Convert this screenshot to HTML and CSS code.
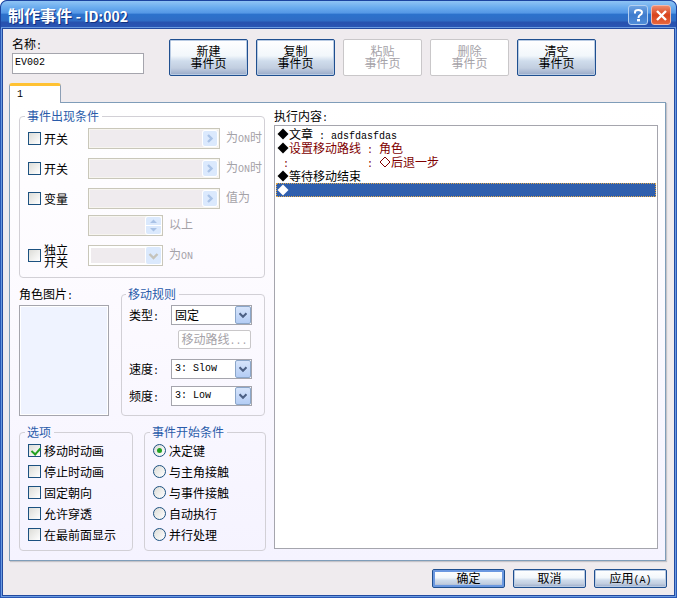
FILE: index.html
```html
<!DOCTYPE html>
<html lang="zh-CN">
<head>
    <meta charset="UTF-8">
    <meta name="viewport" content="width=device-width, initial-scale=1.0">
    <title>制作事件 - ID:002</title>
    <link rel="stylesheet" href="styles.css">
</head>
<body>
    <div class="window">
        <div class="title-bar">
            <h1 class="title">制作事件 <span class="title-id">- ID:002</span></h1>
            <button class="title-button help" aria-label="帮助">
                <svg width="17" height="17" viewBox="0 0 17 17"><path d="M5 6.5V5.2Q5 3 8.3 3Q12 3 12 5.6Q12 7.2 10 8.2Q8.5 9 8.5 11" fill="none" stroke="#fff" stroke-width="2"/><rect x="7" y="12" width="3" height="2.4" fill="#fff"/></svg>
            </button>
            <button class="title-button close" aria-label="关闭">
                <svg width="17" height="17" viewBox="0 0 17 17"><path d="M4 4L13 13M13 4L4 13" stroke="#fff" stroke-width="2.4"/></svg>
            </button>
        </div>

        <div class="content">
            <div class="header">
                <div class="name-field">
                    <label for="name">名称<span class="latin">:</span></label>
                    <input class="text-box" type="text" id="name" value="EV002">
                </div>
                <div class="page-buttons">
                    <button class="button page-button">新建<br>事件页</button>
                    <button class="button page-button">复制<br>事件页</button>
                    <button class="button page-button" disabled>粘贴<br>事件页</button>
                    <button class="button page-button" disabled>删除<br>事件页</button>
                    <button class="button page-button">清空<br>事件页</button>
                </div>
            </div>

            <button class="tab">1</button>
            <div class="panel">
                <div class="settings">
                    <fieldset class="group conditions">
                        <legend>事件出现条件</legend>
                        <div class="row">
                            <label class="check"><input type="checkbox">开关</label>
                            <button class="picker" aria-label="选择开关" disabled>
                                <svg class="arrow" width="14" height="15" viewBox="0 0 14 15"><path d="M5 4L8.5 7.5L5 11" fill="none" stroke="#a9c2e6" stroke-width="2.4"/></svg>
                            </button>
                            <span class="suffix">为<span class="latin">ON</span>时</span>
                        </div>
                        <div class="row">
                            <label class="check"><input type="checkbox">开关</label>
                            <button class="picker" aria-label="选择开关" disabled>
                                <svg class="arrow" width="14" height="15" viewBox="0 0 14 15"><path d="M5 4L8.5 7.5L5 11" fill="none" stroke="#a9c2e6" stroke-width="2.4"/></svg>
                            </button>
                            <span class="suffix">为<span class="latin">ON</span>时</span>
                        </div>
                        <div class="row variable">
                            <label class="check"><input type="checkbox">变量</label>
                            <button class="picker" aria-label="选择变量" disabled>
                                <svg class="arrow" width="14" height="15" viewBox="0 0 14 15"><path d="M5 4L8.5 7.5L5 11" fill="none" stroke="#a9c2e6" stroke-width="2.4"/></svg>
                            </button>
                            <span class="suffix">值为</span>
                        </div>
                        <div class="row amount">
                            <div class="spinner">
                                <input type="text" aria-label="变量值" disabled>
                                <svg class="arrow" width="15" height="17" viewBox="0 0 15 17"><path d="M0 8.5H15" stroke="#fff"/><path d="M4 6L7.5 2.5L11 6ZM4 11L7.5 14.5L11 11Z" fill="#a9c2e6"/></svg>
                            </div>
                            <span class="suffix">以上</span>
                        </div>
                        <div class="row">
                            <label class="check"><input type="checkbox"><span>独立<br>开关</span></label>
                            <div class="select self-switch">
                                <select aria-label="独立开关" disabled><option></option></select>
                                <svg class="arrow" width="15" height="17" viewBox="0 0 15 17"><path d="M3.5 7L7.5 11L11.5 7" fill="none" stroke="#c5c3bb" stroke-width="2.4"/></svg>
                            </div>
                            <span class="suffix">为<span class="latin">ON</span></span>
                        </div>
                    </fieldset>

                    <div class="columns">
                        <div class="graphic">
                            <span>角色图片<span class="latin">:</span></span>
                            <button class="graphic-box" aria-label="角色图片"></button>
                        </div>
                        <fieldset class="group movement">
                            <legend>移动规则</legend>
                            <div class="row">
                                <label class="caption" for="type">类型<span class="latin">:</span></label>
                                <div class="select">
                                    <select id="type" class="cjk"><option>固定</option></select>
                                    <svg class="arrow" width="16" height="18" viewBox="0 0 16 18"><path d="M4 7L8 11L12 7" fill="none" stroke="#4d6185" stroke-width="2.4"/></svg>
                                </div>
                            </div>
                            <button class="button route" disabled>移动路线<span class="latin">...</span></button>
                            <div class="row speed">
                                <label class="caption" for="speed">速度<span class="latin">:</span></label>
                                <div class="select">
                                    <select id="speed"><option>3: Slow</option></select>
                                    <svg class="arrow" width="16" height="18" viewBox="0 0 16 18"><path d="M4 7L8 11L12 7" fill="none" stroke="#4d6185" stroke-width="2.4"/></svg>
                                </div>
                            </div>
                            <div class="row">
                                <label class="caption" for="freq">频度<span class="latin">:</span></label>
                                <div class="select">
                                    <select id="freq"><option>3: Low</option></select>
                                    <svg class="arrow" width="16" height="18" viewBox="0 0 16 18"><path d="M4 7L8 11L12 7" fill="none" stroke="#4d6185" stroke-width="2.4"/></svg>
                                </div>
                            </div>
                        </fieldset>
                    </div>

                    <div class="columns">
                        <fieldset class="group options">
                            <legend>选项</legend>
                            <label class="check"><input type="checkbox" checked>移动时动画</label>
                            <label class="check"><input type="checkbox">停止时动画</label>
                            <label class="check"><input type="checkbox">固定朝向</label>
                            <label class="check"><input type="checkbox">允许穿透</label>
                            <label class="check"><input type="checkbox">在最前面显示</label>
                        </fieldset>
                        <fieldset class="group options trigger">
                            <legend>事件开始条件</legend>
                            <label class="check"><input type="radio" name="trigger" checked>决定键</label>
                            <label class="check"><input type="radio" name="trigger">与主角接触</label>
                            <label class="check"><input type="radio" name="trigger">与事件接触</label>
                            <label class="check"><input type="radio" name="trigger">自动执行</label>
                            <label class="check"><input type="radio" name="trigger">并行处理</label>
                        </fieldset>
                    </div>
                </div>

                <div class="commands">
                    <div>执行内容<span class="latin">:</span></div>
                    <ul class="command-list">
                        <li><svg class="mark" viewBox="0 0 12 12"><path d="M6 0.5L11.5 6L6 11.5L0.5 6Z"/></svg>文章<span class="latin"> : adsfdasfdas</span></li>
                        <li><svg class="mark" viewBox="0 0 12 12"><path d="M6 0.5L11.5 6L6 11.5L0.5 6Z"/></svg><span class="move">设置移动路线<span class="latin"> : </span>角色</span></li>
                        <li class="move"><span class="latin"> :             : </span><svg class="mark hollow" viewBox="0 0 12 12"><path d="M6 1L11 6L6 11L1 6Z"/></svg>后退一步</li>
                        <li><svg class="mark" viewBox="0 0 12 12"><path d="M6 0.5L11.5 6L6 11.5L0.5 6Z"/></svg>等待移动结束</li>
                        <li class="selected"><svg class="mark" viewBox="0 0 12 12"><path d="M6 0.5L11.5 6L6 11.5L0.5 6Z"/></svg></li>
                    </ul>
                </div>
            </div>

            <div class="footer">
                <button class="button default">确定</button>
                <button class="button">取消</button>
                <button class="button">应用<span class="latin">(A)</span></button>
            </div>
        </div>
    </div>
</body>
</html>
```
FILE: styles.css
```css
* {
    box-sizing: border-box;
}

body {
    margin: 0;
    background-color: #fff;
    color: #000;
    font: 12px/14px "Noto Sans CJK SC", sans-serif;
}

button, input, select {
    margin: 0;
    padding: 0;
    font: inherit;
    color: inherit;
}

.latin {
    font-family: "Liberation Mono", monospace;
    font-size: 10px;
    line-height: 0;
    white-space: pre;
}

/* window frame */
.window {
    min-height: 100vh;
    display: flex;
    flex-direction: column;
    border-radius: 7px 7px 0 0;
    background-color: #2a57b5;
    overflow: hidden;
}

.title-bar {
    height: 29px;
    flex: none;
    display: flex;
    align-items: center;
    gap: 3px;
    padding: 1px 5px 0 7px;
    border: 1px solid #1c44a0;
    border-bottom-color: #234a9f;
    border-radius: 7px 7px 0 0;
    background: linear-gradient(#8fc4f4 0, #69abee 25%, #5598e6 44%, #2c72cc 50%, #2f6dc6 72%, #2751ae 80%, #2a56b6 100%);
}

.title {
    flex: 1;
    margin: 0;
    color: #fff;
    font-size: 16px;
    line-height: 20px;
    font-weight: bold;
    text-shadow: 1px 1px 0 #10307f;
}

.title-id {
    font-size: 14px;
}

.title-button {
    width: 20px;
    height: 20px;
    display: flex;
    align-items: center;
    justify-content: center;
    border: 1px solid #b4d0f0;
    border-radius: 3px;
    background: linear-gradient(#6fa4e2, #3f7bcd 50%, #4f8cd8);
}

.title-button.close {
    border-color: #f0b8ac;
    background: linear-gradient(#ee8a6c, #d8431c 50%, #e8663c);
}

.content {
    flex: 1;
    display: flex;
    flex-direction: column;
    margin: 0 3px 3px;
    padding: 8px 7px 7px 6px;
    background-color: #efebee;
    box-shadow: 0 0 0 1px #234a9f, 0 0 0 2px #6a9be0;
}

/* name and page buttons */
.header {
    display: flex;
    gap: 25px;
    padding: 0 3px 7px;
}

.name-field {
    width: 132px;
    display: flex;
    flex-direction: column;
    gap: 2px;
}

.text-box {
    height: 21px;
    padding: 0 2px 2px;
    border: 1px solid #a5a5ad;
    background-color: #fff;
    font-family: "Liberation Mono", monospace;
    font-size: 10px;
}

.page-buttons {
    display: flex;
    gap: 8px;
    padding-top: 2px;
}

.button {
    width: 73px;
    height: 19px;
    padding-bottom: 1px;
    border: 1px solid #1f4f8f;
    border-radius: 2px;
    background: linear-gradient(#fff, #f2f7fb 45%, #cfdcec 60%, #c2cee0 80%, #98a9c8);
    box-shadow: inset 0 0 0 1px #b9cbe3;
    line-height: 14px;
    white-space: nowrap;
}

.page-button {
    width: 79px;
    height: 37px;
    line-height: 12px;
}

.button.default {
    box-shadow: inset 0 0 0 2px #6b98e0;
}

.button:disabled {
    border-color: #c9c7c9;
    background: #fff;
    box-shadow: none;
    color: #a5a2a8;
}

/* event page */
.tab {
    width: 52px;
    height: 20px;
    flex: none;
    align-self: flex-start;
    position: relative;
    padding: 0 0 0 7px;
    border: 1px solid #8d9fb5;
    border-top: 3px solid #ffc233;
    border-bottom: none;
    border-radius: 3px 3px 0 0;
    background-color: #fff;
    font-family: "Liberation Mono", monospace;
    font-size: 10px;
    text-align: left;
}

.panel {
    flex: 1;
    display: flex;
    gap: 8px;
    margin: -1px 1px 0 0;
    padding: 6px 7px 9px 9px;
    border: 1px solid #7f9db9;
    background: linear-gradient(#fff, #fdfbff 35%, #f5f3ff);
    box-shadow: 1px 1px 1px #c5c3c8;
}

.settings {
    width: 247px;
    flex: none;
    display: flex;
    flex-direction: column;
    gap: 9px;
}

.group {
    min-width: 0;
    margin: 0;
    padding: 0 8px;
    border: 1px solid #d2d0d6;
    border-radius: 4px;
}

.group legend {
    margin-left: -3px;
    padding: 0 3px 0 2px;
    color: #2a5caa;
}

.row {
    display: flex;
    align-items: center;
}

.conditions {
    width: 246px;
    padding: 5px 0 11px 8px;
}

.conditions .row {
    height: 21px;
    margin-bottom: 9px;
}

.conditions .row.variable {
    margin-bottom: 6px;
}

.conditions .row:last-child {
    margin-bottom: 0;
}

.conditions .check {
    width: 60px;
    line-height: 12px;
}

.amount {
    padding-left: 60px;
}

.check {
    display: flex;
    align-items: center;
    gap: 3px;
    white-space: nowrap;
}

.check input {
    appearance: none;
    width: 13px;
    height: 13px;
    flex: none;
    position: relative;
    border: 1px solid #1c5180;
    background: linear-gradient(135deg, #dcdcd7, #fff);
}

.check input[type="radio"] {
    border-radius: 50%;
}

.check input[type="checkbox"]:checked::after {
    content: "";
    position: absolute;
    left: 4px;
    top: 1px;
    width: 4px;
    height: 7px;
    border: solid #21a121;
    border-width: 0 2px 2px 0;
    transform: rotate(42deg);
}

.check input[type="radio"]:checked::after {
    content: "";
    position: absolute;
    left: 3px;
    top: 3px;
    width: 5px;
    height: 5px;
    border-radius: 50%;
    background-color: #21a121;
}

.picker, .spinner {
    width: 132px;
    height: 21px;
    flex: none;
    position: relative;
    border: 1px solid #c9c7ba;
    box-shadow: inset 0 0 0 1px #f7f5f0;
    background-color: #efebee;
}

.spinner {
    width: 75px;
}

.spinner input {
    width: 55px;
    height: 17px;
    border: none;
    background: none;
}

.arrow {
    position: absolute;
    top: 1px;
    right: 1px;
    border-radius: 2px;
    background: linear-gradient(#d6e4fb, #b4cdf5);
    pointer-events: none;
}

.picker .arrow {
    top: 2px;
    right: 2px;
    background: #dbe9fd;
    box-shadow: 0 0 0 1px #fff;
}

.suffix {
    padding: 0 0 3px 6px;
    color: #a5a2a8;
    white-space: nowrap;
}

.select {
    width: 81px;
    height: 20px;
    flex: none;
    position: relative;
}

.select select {
    appearance: none;
    width: 100%;
    height: 100%;
    padding: 0 18px 0 3px;
    border: 1px solid #a5a5ad;
    border-radius: 0;
    background-color: #fff;
    font-family: "Liberation Mono", monospace;
    font-size: 10px;
}

.select .cjk {
    font-family: "Noto Sans CJK SC", sans-serif;
    font-size: 12px;
}

.select .arrow {
    border: 1px solid #8ba6c9;
}

.select.self-switch {
    width: 75px;
    height: 21px;
}

.self-switch select:disabled {
    border-color: #c9c7ba;
    background-color: #efebee;
    box-shadow: inset 0 0 0 2px #fff;
    opacity: 1;
}

.self-switch .arrow, .spinner .arrow {
    border: none;
    background: #dbe9fd;
    box-shadow: 0 0 0 1px #fff;
}

.self-switch .arrow {
    top: 2px;
    right: 2px;
}

.columns {
    display: flex;
    align-items: stretch;
}

.graphic {
    width: 90px;
    display: flex;
    flex-direction: column;
    gap: 4px;
    margin-right: 12px;
}

.graphic-box {
    flex: 1;
    border: 1px solid #a5a5ad;
    background-color: #eff3ff;
    box-shadow: inset 0 0 0 1px #fff;
}

.movement {
    width: 144px;
    padding: 4px 0 9px 7px;
}

.caption {
    width: 42px;
}

.route {
    display: block;
    margin: 5px 0 10px 49px;
}

.speed {
    margin-bottom: 7px;
}

.options {
    width: 114px;
    padding: 1px 0 5px 8px;
}

.options .check {
    height: 21px;
}

.trigger {
    width: 122px;
    margin-left: 11px;
}

/* command list */
.commands {
    flex: 1;
    display: flex;
    flex-direction: column;
    gap: 2px;
    padding-bottom: 2px;
}

.command-list {
    flex: 1;
    margin: 0;
    padding: 1px;
    border: 1px solid #a5a5ad;
    background-color: #fff;
    list-style: none;
}

.command-list li {
    height: 14px;
    padding-left: 1px;
    white-space: pre;
}

.command-list .move {
    color: #800000;
}

.command-list .selected {
    background-color: #2f5fae;
    color: #fff;
    outline: 1px dotted #e0a84a;
    outline-offset: -1px;
}

.mark {
    width: 12px;
    height: 12px;
    vertical-align: -1px;
    fill: currentColor;
}

.mark.hollow {
    fill: none;
    stroke: currentColor;
}

.footer {
    display: flex;
    justify-content: flex-end;
    gap: 8px;
    padding-top: 8px;
}
```
